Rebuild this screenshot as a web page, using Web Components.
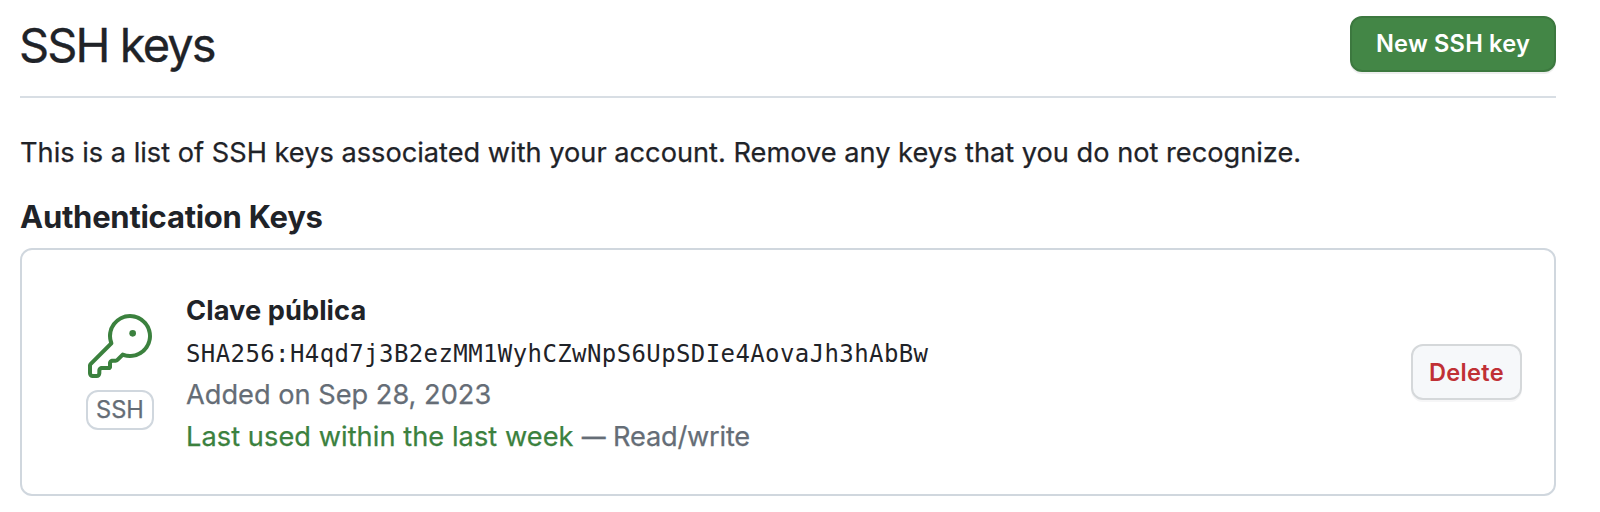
<!DOCTYPE html>
<html lang="en">
<head>
<meta charset="utf-8">
<title>SSH keys</title>
<style>
  body { margin: 0; background: #fff; color: #1f2328; font-family: Inter, "Liberation Sans", sans-serif; }
</style>
</head>
<body>
<keys-page></keys-page>

<template id="keys-page">
  <style>
    :host { display: block; box-sizing: border-box; padding: 16px 44px 16px 20px; }
    p { margin: 34px 0 23px; font-size: 27.2px; line-height: 42px; -webkit-text-stroke: .25px; }
    h2 { margin: 0 0 11px; font-size: 31px; font-weight: 700; line-height: 40px; letter-spacing: -.26px; }
  </style>
  <page-header>
    SSH keys
    <action-button slot="action" variant="primary">New SSH key</action-button>
  </page-header>
  <p>This is a list of SSH keys associated with your account. Remove any keys that you do not recognize.</p>
  <h2>Authentication Keys</h2>
  <key-card>
    <span slot="name">Clave pública</span>
    <span slot="hash">SHA256:H4qd7j3B2ezMM1WyhCZwNpS6UpSDIe4AovaJh3hAbBw</span>
    <span slot="added">Added on Sep 28, 2023</span>
    <span slot="used">Last used within the last week</span>
    <span slot="access">Read/write</span>
    <action-button slot="action" variant="danger">Delete</action-button>
  </key-card>
</template>

<template id="page-header">
  <style>
    :host { display: flex; justify-content: space-between; align-items: flex-start; padding-bottom: 24px; border-bottom: 2px solid #d8dee4; }
    h1 { margin: 0 0 0 -1px; padding-top: 1px; height: 55px; font-size: 47px; font-weight: 400; line-height: 56px; letter-spacing: -1.9px; -webkit-text-stroke: .3px; }
  </style>
  <h1><slot></slot></h1>
  <slot name="action"></slot>
</template>

<template id="action-button">
  <style>
    :host { display: block; flex: none; }
    button { display: block; box-sizing: border-box; height: 56px; border: 2px solid; border-radius: 12px; padding: 0; margin: 0; text-align: center; font: 600 23.6px/50px Inter, "Liberation Sans", sans-serif; }
    :host([variant="primary"]) button { width: 206px; color: #fff; background: #438646; border-color: #3c783f; box-shadow: 0 2px 0 rgba(31,35,40,.08); letter-spacing: .2px; }
    :host([variant="danger"]) button { width: 111px; padding-top: 2px; color: #c03035; background: #f6f8fa; border-color: #d5d8da; box-shadow: 0 2px 0 rgba(31,35,40,.04); letter-spacing: .3px; }
  </style>
  <button type="button"><slot></slot></button>
</template>

<template id="key-card">
  <style>
    :host { display: flex; align-items: center; box-sizing: border-box; height: 248px; padding: 0 32px 0 64px; border: 2px solid #d0d7de; border-radius: 12px; }
    .kind { width: 68px; flex: none; display: flex; flex-direction: column; align-items: center; gap: 12px; }
    svg { display: block; width: 64px; height: 64px; fill: #3b813e; }
    .label { box-sizing: border-box; width: 68px; height: 40px; border: 2px solid #d0d7de; border-radius: 12px; font-size: 23.6px; line-height: 36px; text-align: center; color: #656d76; -webkit-text-stroke: .25px; }
    .info { flex: 1; margin-left: 32px; padding-top: 4px; font-size: 27.2px; line-height: 42px; color: #656d76; -webkit-text-stroke: .25px; }
    .info > div { height: 42px; white-space: nowrap; }
    .info > .name { font-weight: 700; letter-spacing: .08px; color: #1f2328; -webkit-text-stroke: 0; }
    .info > .hash { box-sizing: border-box; padding-top: 1px; font: 24px/42px "DejaVu Sans Mono", monospace; letter-spacing: .4px; color: #1f2328; -webkit-text-stroke: 0; }
    .used { color: #3b813e; letter-spacing: .06px; }
    .dash { display: inline-block; transform: scaleX(.88); margin: 0 -1.5px; }
    .access { letter-spacing: -.2px; }
  </style>
  <div class="kind">
    <svg viewBox="0 0 24 24" aria-hidden="true"><path d="M16.75 8.5a1.25 1.25 0 1 0 0-2.5 1.25 1.25 0 0 0 0 2.5Z"/><path d="M15.75 0a8.25 8.25 0 1 1-2.541 16.101l-1.636 1.636a1.744 1.744 0 0 1-1.237.513H9.25a.25.25 0 0 0-.25.25v1.448a.876.876 0 0 1-.256.619l-.214.213a.75.75 0 0 1-.545.22H5.25a.25.25 0 0 0-.25.25v1A1.75 1.75 0 0 1 3.25 24h-1.5A1.75 1.75 0 0 1 0 22.25v-2.836c0-.464.185-.908.513-1.236l7.386-7.388A8.249 8.249 0 0 1 15.75 0ZM9 8.25a6.733 6.733 0 0 0 .463 2.462.75.75 0 0 1-.168.804l-7.722 7.721a.25.25 0 0 0-.073.177v2.836c0 .138.112.25.25.25h1.5a.25.25 0 0 0 .25-.25v-1c0-.966.784-1.75 1.75-1.75H7.5v-1c0-.966.784-1.75 1.75-1.75h1.086a.25.25 0 0 0 .177-.073l1.971-1.972a.75.75 0 0 1 .804-.168A6.75 6.75 0 1 0 9 8.25Z"/></svg>
    <div class="label">SSH</div>
  </div>
  <div class="info">
    <div class="name"><slot name="name"></slot></div>
    <div class="hash"><slot name="hash"></slot></div>
    <div><slot name="added"></slot></div>
    <div><span class="used"><slot name="used"></slot></span> <span class="dash">—</span> <span class="access"><slot name="access"></slot></span></div>
  </div>
  <slot name="action"></slot>
</template>

<script>
  for (const tag of ['action-button', 'page-header', 'key-card', 'keys-page']) {
    customElements.define(tag, class extends HTMLElement {
      constructor() {
        super();
        this.attachShadow({ mode: 'open' })
          .append(document.getElementById(tag).content.cloneNode(true));
      }
    });
  }
</script>
</body>
</html>
